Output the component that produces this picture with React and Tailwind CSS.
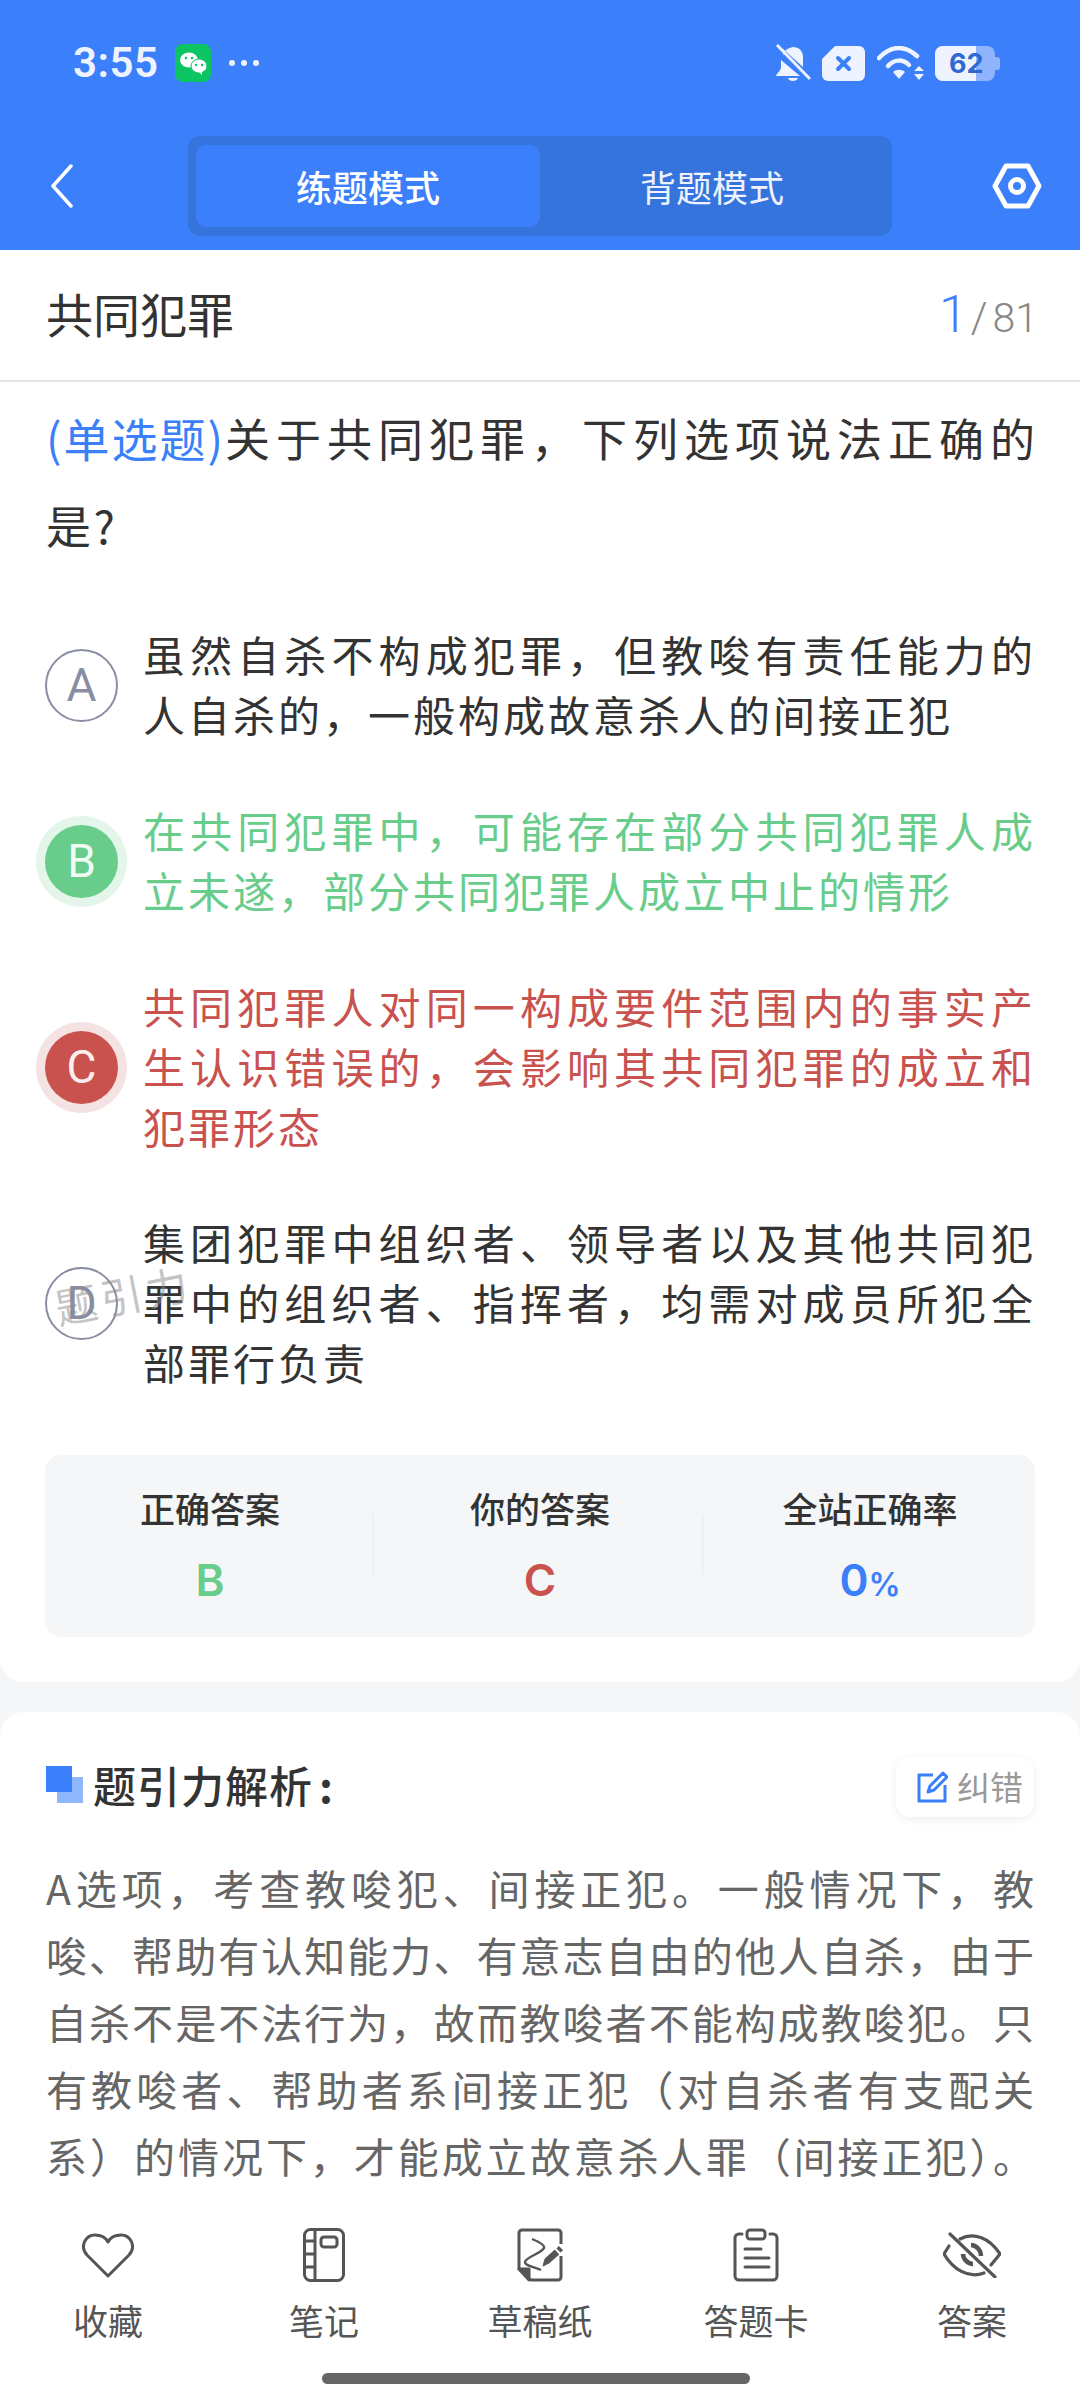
function Heart() {
  return (<svg width="54" height="46" viewBox="0 0 54 46" fill="none" stroke="#555" strokeWidth="3" strokeLinejoin="round"><path d="M27 44L6 23C-2 14 5 3 14 3C20 3 25 6 27 10C29 6 34 3 40 3C49 3 56 14 48 23Z"/></svg>);
}
function Notebook() {
  return (<svg width="42" height="54" viewBox="0 0 42 54" fill="none" stroke="#555" strokeWidth="3"><rect x="1.500" y="1.500" width="39" height="51" rx="6"/><path d="M12 2V52M2 13H12M2 26H12M2 39H12"/><rect x="18" y="9" width="16" height="10" rx="3"/></svg>);
}
function Draft() {
  return (<svg width="46" height="54" viewBox="0 0 46 54" fill="none" stroke="#555" strokeWidth="3" strokeLinejoin="round"><path d="M44 16V5a3 3 0 0 0-3-3H5a3 3 0 0 0-3 3V41L14 52H41a3 3 0 0 0 3-3V28"/><path d="M2 41H12V52Z" fill="#555"/><path d="M15 11C20 13 28 17 27 20C25 25 9 29 8 34C8 38 18 39 24 42" strokeWidth="2.400"/><path d="M30 33L40 24" strokeWidth="6.500"/><path d="M41.500 22.500L44 20" strokeWidth="6"/><path d="M26 38L28 31L32 35Z" fill="#555" strokeWidth="1"/></svg>);
}
function Clip() {
  return (<svg width="46" height="54" viewBox="0 0 46 54" fill="none" stroke="#555" strokeWidth="3" strokeLinecap="round"><path d="M9 6H6a4 4 0 0 0-4 4V48a4 4 0 0 0 4 4H40a4 4 0 0 0 4-4V10a4 4 0 0 0-4-4H37"/><rect x="14" y="2" width="18" height="9" rx="3"/><path d="M12 21H28M12 30H36M12 39H36"/></svg>);
}
function EyeOff() {
  return (<svg width="58" height="46" viewBox="0 0 58 46" fill="none" stroke="#555" strokeWidth="3.200" strokeLinecap="round"><path d="M7 2L52 45" /><path d="M17 7C30 0 46 5 57 22L48 33M6 14L1 22C10 37 25 47 41 41"/><path d="M28 13C33 13 38 18 38 24" strokeWidth="4.500" strokeLinecap="butt"/><path d="M20 22C20 27 25 32 30 32" strokeWidth="4.500" strokeLinecap="butt"/></svg>);
}
function Option({ letter, lines, tone }) {
  const wrap = tone === "green" ? "bg-[#68cc8a] text-[#eefaf2] ring-[9px] ring-[#e4f6ea]" : tone === "red" ? "bg-[#c9524f] text-[#fbeeee] ring-[9px] ring-[#f5e2e3]" : "border-2 border-[#8a8ea3] text-[#8a8ea3]";
  const txt = tone === "green" ? "text-[#68cc8a]" : tone === "red" ? "text-[#c9524f]" : "text-[#333333]";
  return (
    <div className="flex items-center">
      <div className={"ml-[45px] flex h-[73px] w-[73px] shrink-0 items-center justify-center rounded-full font-['Roboto'] text-[46px] " + wrap}>{letter}</div>
      <div className={"ml-[25px] w-[893px] -translate-y-px text-[42px] leading-[60px] tracking-[3px] " + txt}>
        {lines.map((l, i) => <div key={l} className={i < lines.length - 1 ? "[text-align-last:justify]" : ""}>{l}</div>)}
      </div>
    </div>
  );
}
function Stat({ label, children, border }) {
  return (
    <div className={"relative flex flex-col items-center pt-[33px]"}>
      {border && <div className="absolute -left-[3px] top-[60px] h-[60px] w-[2px] bg-[#eef0f3]" />}
      <div className="text-[35px] font-medium leading-[40px] text-[#333333]">{label}</div>
      <div className="mt-[27px] flex items-baseline font-['Inter'] text-[44px] font-semibold leading-[50px]">{children}</div>
    </div>
  );
}
function NavItem({ icon, label }) {
  return (
    <div className="flex flex-col items-center">
      <div className="flex h-[60px] items-center">{icon}</div>
      <div className="mt-[13px] text-[35px] leading-[44px] text-[#555555]">{label}</div>
    </div>
  );
}
export default function App() {
  return (
    <div className="relative flex h-[2400px] w-[1080px] flex-col overflow-hidden bg-[#f5f6f8] font-['Noto_Sans_CJK_SC',sans-serif]">
      <header className="h-[250px] shrink-0 bg-[#3b7ffa]">
        <div className="flex h-[126px] items-center justify-between pl-[73px] pr-[80px]">
          <div className="flex items-center">
            <span className="font-['Roboto'] text-[42px] font-semibold leading-none tracking-[0.5px] text-[#eef3ff]">3:55</span>
            <svg className="ml-[17px]" width="36" height="38" viewBox="0 0 36 38"><rect width="36" height="38" rx="8" fill="#0cc562"/><ellipse cx="14" cy="16" rx="9" ry="7.500" fill="#fff"/><ellipse cx="24" cy="22" rx="8" ry="7" fill="#fff" stroke="#0cc562"/><path d="M24 28L27 31L27 27Z" fill="#fff"/><circle cx="11" cy="14" r="1.300" fill="#0cc562"/><circle cx="17" cy="14" r="1.300" fill="#0cc562"/><circle cx="21" cy="21" r="1.200" fill="#0cc562"/><circle cx="27" cy="21" r="1.200" fill="#0cc562"/></svg>
            <div className="ml-[18px] flex gap-[6px]">
              <span className="h-[6px] w-[6px] rounded-full bg-[#eef3ff]"/><span className="h-[6px] w-[6px] rounded-full bg-[#eef3ff]"/><span className="h-[6px] w-[6px] rounded-full bg-[#eef3ff]"/>
            </div>
          </div>
          <div className="flex items-center">
            <svg width="36" height="40" viewBox="0 0 36 40" fill="#eef3ff"><path d="M8 13C9 7 13 5 18 4C24 4 28 8 28 14V24L8 6ZM6 17L25 33H1C1 31 6 28 6 24Z"/><path d="M13 35H23C22 39 14 39 13 35Z"/><path d="M2 2L35 36" stroke="#eef3ff" strokeWidth="3"/></svg>
            <svg className="ml-[11px]" width="43" height="35" viewBox="0 0 43 35"><path d="M13 0H37a6 6 0 0 1 6 6V29a6 6 0 0 1-6 6H6a6 6 0 0 1-6-6V13Z" fill="#eef3ff"/><path d="M16 12L27 23M27 12L16 23" stroke="#3b7ffa" strokeWidth="4" strokeLinecap="round"/></svg>
            <svg className="ml-[12px]" width="48" height="34" viewBox="0 0 48 34" fill="none"><path d="M2 12C14 -1 28 -1 40 10" stroke="#eef3ff" strokeWidth="4.500" strokeLinecap="round"/><path d="M11 20C17 13 26 13 32 19" stroke="#eef3ff" strokeWidth="4.500" strokeLinecap="round"/><path d="M16 26C19 23 25 23 28 26L22 33Z" fill="#eef3ff"/><path d="M38 20L43 25H33ZM38 34L43 28H33Z" fill="#eef3ff" transform="translate(4 0)"/></svg>
            <div className="relative ml-[10px] h-[35px] w-[65px]">
              <div className="absolute left-0 top-0 h-[35px] w-[60px] rounded-[8px] bg-[#8fb4fb]" />
              <div className="absolute right-0 top-[11px] h-[13px] w-[5px] rounded-r-[3px] bg-[#8fb4fb]" />
              <div className="absolute left-0 top-0 h-[35px] w-[41px] rounded-l-[8px] bg-[#eef3ff]" />
              <div className="absolute left-[14px] top-0 font-['Inter'] text-[27px] font-bold leading-[35px] text-[#2f68cf]">62</div>
            </div>
          </div>
        </div>
        <div className="grid h-[119px] grid-cols-[188px_704px_188px] items-center">
          <svg className="ml-[50px]" width="24" height="44" viewBox="0 0 24 44" fill="none" stroke="#fff" strokeWidth="3.500" strokeLinecap="round" strokeLinejoin="round"><path d="M21 2L3 22L21 42"/></svg>
          <div className="flex h-[100px] items-center rounded-[12px] bg-[#3573dd] px-[8px]">
            <div className="flex h-[82px] w-[344px] items-center justify-center rounded-[10px] bg-[#3b7ffa] text-[36px] font-medium text-white">练题模式</div>
            <div className="flex h-[82px] w-[344px] items-center justify-center text-[36px] text-[#eef3ff]">背题模式</div>
          </div>
          <svg className="ml-[100px]" width="50" height="46" viewBox="0 0 50 46" fill="none" stroke="#fff" strokeWidth="5" strokeLinejoin="round"><path d="M14 3H36L47 23L36 43H14L3 23Z"/><circle cx="25" cy="23" r="6.500"/></svg>
        </div>
      </header>
      <main className="flex flex-1 flex-col overflow-hidden">
        <section className="shrink-0 rounded-b-[24px] bg-white pb-[45px]">
          <div className="flex h-[132px] items-center justify-between border-b-2 border-[#e5e5e5] pl-[46px] pr-[42px]">
            <div className="-translate-y-[3px] text-[47px] leading-none text-[#333333]">共同犯罪</div>
            <div className="flex items-baseline font-['Roboto'] font-light">
              <span className="text-[52px] leading-none text-[#3b7ffa]">1</span>
              <span className="ml-[3px] text-[42px] leading-none text-[#888888]">/</span>
              <span className="ml-[5px] text-[41px] leading-none text-[#888888]">81</span>
            </div>
          </div>
          <div className="whitespace-nowrap px-[46px] pt-[12px] text-[45px] leading-[87px] tracking-[6px] text-[#333333]">
            <div><span className="text-[46px] tracking-[2px] text-[#3b7ffa]">(单选题)</span>关于共同犯罪，下列选项说法正确的</div>
            <div className="tracking-[2.500px]">是?</div>
          </div>
          <div className="mt-[57px] flex flex-col gap-[56px]">
            <Option letter="A" lines={["虽然自杀不构成犯罪，但教唆有责任能力的", "人自杀的，一般构成故意杀人的间接正犯"]} />
            <Option letter="B" tone="green" lines={["在共同犯罪中，可能存在部分共同犯罪人成", "立未遂，部分共同犯罪人成立中止的情形"]} />
            <Option letter="C" tone="red" lines={["共同犯罪人对同一构成要件范围内的事实产", "生认识错误的，会影响其共同犯罪的成立和", "犯罪形态"]} />
            <div className="relative">
              <Option letter="D" lines={["集团犯罪中组织者、领导者以及其他共同犯", "罪中的组织者、指挥者，均需对成员所犯全", "部罪行负责"]} />
              <div className="absolute left-[54px] top-[60px] -rotate-[11deg] whitespace-nowrap text-[42px] leading-none tracking-[4px] text-[#8a8a8a]/50">题引力</div>
            </div>
          </div>
          <div className="mx-[45px] mt-[62px] grid h-[182px] grid-cols-3 rounded-[16px] bg-[#f5f6f8]">
            <Stat label="正确答案"><span className="text-[#68cc8a]">B</span></Stat>
            <Stat label="你的答案" border><span className="text-[#c9524f]">C</span></Stat>
            <Stat label="全站正确率" border><span className="text-[#3b7ffa]">0</span><span className="text-[32px] text-[#3b7ffa]">%</span></Stat>
          </div>
        </section>
        <section className="mt-[30px] flex-1 rounded-t-[24px] bg-white px-[46px] pt-[42px]">
          <div className="flex h-[60px] items-center justify-between">
            <div className="flex items-center">
              <svg width="37" height="37" viewBox="0 0 37 37"><rect x="11" y="11" width="26" height="26" fill="#8fb8fc"/><rect width="26" height="26" fill="#3b7ffa"/></svg>
              <div className="ml-[10px] text-[43px] font-medium leading-none tracking-[1px] text-[#333333]">题引力解析<span className="ml-[6px] font-bold">:</span></div>
            </div>
            <div className="flex h-[60px] w-[138px] translate-y-[3px] items-center gap-[9px] rounded-[14px] bg-white pl-[21px] text-[33px] text-[#999999] shadow-[0_2px_10px_rgba(0,0,0,0.08)]">
              <svg className="shrink-0" width="31" height="32" viewBox="0 0 31 32" fill="none" stroke="#3b7ffa" strokeWidth="3"><path d="M16 4H2V30H28V14"/><path d="M26 2L30 6L17 19L11 21L13 15Z" strokeLinejoin="round"/></svg>
              <span className="whitespace-nowrap">纠错</span>
            </div>
          </div>
          <div className="mt-[40px] text-justify text-[41px] leading-[67px] text-[#666666] [text-align-last:justify]">
            A选项，考查教唆犯、间接正犯。一般情况下，教<br/>
            唆、帮助有认知能力、有意志自由的他人自杀，由于<br/>
            自杀不是不法行为，故而教唆者不能构成教唆犯。只<br/>
            有教唆者、帮助者系间接正犯（对自杀者有支配关<br/>
            系）的情况下，才能成立故意杀人罪（间接正犯）。
          </div>
        </section>
      </main>
      <nav className="h-[215px] shrink-0 bg-white pt-[40px]">
        <div className="grid grid-cols-5">
          <NavItem icon={<Heart />} label="收藏" />
          <NavItem icon={<Notebook />} label="笔记" />
          <NavItem icon={<Draft />} label="草稿纸" />
          <NavItem icon={<Clip />} label="答题卡" />
          <NavItem icon={<EyeOff />} label="答案" />
        </div>
        <div className="ml-[322px] mt-[31px] h-[11px] w-[428px] rounded-full bg-[#666666]" />
      </nav>
    </div>
  );
}
